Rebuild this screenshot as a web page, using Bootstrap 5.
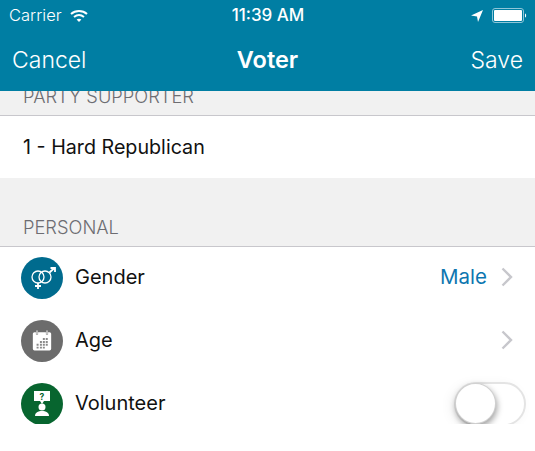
<!DOCTYPE html>
<html lang="en">

<head>
    <meta charset="UTF-8">
    <meta name="viewport" content="width=device-width, initial-scale=1.0">
    <title>Voter</title>

    <link rel="stylesheet" href="https://cdn.jsdelivr.net/npm/bootstrap@5.3.0/dist/css/bootstrap.min.css">

    <style>
        body {
            font-family: Inter, "Liberation Sans", sans-serif;
            background-color: #fff;
            overflow: hidden;
        }

        .app-top {
            height: 91px;
            background-color: #007ea3;
            color: #fff;
        }

        .status-bar {
            height: 30px;
            padding: 1px 8px 0 9px;
            font-size: 16.5px;
            font-weight: 300;
        }

        .status-side {
            width: 180px;
        }

        .clock {
            font-weight: 500;
            font-size: 17px;
        }

        .nav-bar {
            height: 61px;
            padding: 0 12px 1px;
            font-size: 23px;
            font-weight: 300;
        }

        .nav-side {
            width: 120px;
        }

        .nav-title {
            font-weight: 600;
            font-size: 23.5px;
        }

        .section-gap {
            background-color: #f1f1f1;
            border-bottom: 1px solid #c8c7cc;
            padding: 0 23px 9px;
            color: #6d6d72;
            font-size: 18.3px;
            font-weight: 300;
            line-height: 20px;
            overflow: hidden;
        }

        .party-head {
            height: 25px;
        }

        .personal-head {
            height: 69px;
        }

        .value-row {
            height: 62px;
            padding: 2px 23px 0;
            font-size: 19.7px;
            color: #111;
        }

        .rows-clip {
            height: 177px;
            overflow: hidden;
        }

        .item-row {
            height: 63px;
            padding: 0 9px 3px 21px;
            font-size: 20px;
            color: #111;
        }

        .item-icon {
            width: 42px;
            height: 42px;
            margin-right: 12px;
            margin-top: 1px;
        }

        .icon-gender { background-color: #006b8e; }
        .icon-age { background-color: #6c6c6c; }
        .icon-volunteer { background-color: #07652f; }

        .item-value {
            color: #0d76b0;
            font-size: 20.5px;
            margin-right: 14px;
        }

        .item-arrow {
            margin-right: 13px;
        }

        .switch-track {
            width: 72px;
            height: 44px;
            margin-top: 9px;
            border: 2px solid #e4e4e4;
            border-radius: 22px;
            background-color: #fff;
            box-shadow: -4px 2px 12px rgba(0, 0, 0, 0.05);
        }

        .switch-knob {
            width: 41px;
            height: 41px;
            margin: -1px 0 0 -1px;
            border-radius: 50%;
            background-color: #fff;
            border: 1px solid rgba(0, 0, 0, 0.18);
            box-shadow: 1px 3px 6px rgba(0, 0, 0, 0.38);
        }
    </style>
</head>

<body>

    <div class="app-top">
        <div class="status-bar d-flex align-items-center justify-content-between">
            <div class="status-side d-flex align-items-center gap-2">
                <span>Carrier</span>
                <svg width="18" height="14" viewBox="0 0 18 14" fill="none" stroke="#fff" stroke-width="2">
                    <path d="M1 5 C5.5 1 12.5 1 17 5" />
                    <path d="M4 8 C7 5.6 11 5.6 14 8" />
                    <path d="M9 13 L6.6 10.6 C8 9.6 10 9.6 11.4 10.6 Z" fill="#fff" stroke="none" />
                </svg>
            </div>
            <span class="clock">11:39 AM</span>
            <div class="status-side d-flex align-items-center justify-content-end gap-2">
                <svg width="14" height="14" viewBox="0 0 14 14" fill="#fff">
                    <path d="M1 6.500 L13 1 L8 13 L7 7.500 Z" />
                </svg>
                <svg width="35" height="15" viewBox="0 0 35 15">
                    <rect x="0.500" y="0.500" width="31" height="14" rx="2.500" fill="none" stroke="#8fc6d8" />
                    <rect x="2" y="2" width="28" height="11" rx="1" fill="#fff" />
                    <path d="M33 5.500 C34.500 5.500 34.500 9.500 33 9.500 Z" fill="#fff" />
                </svg>
            </div>
        </div>
        <div class="nav-bar d-flex align-items-center justify-content-between">
            <span class="nav-side">Cancel</span>
            <span class="nav-title">Voter</span>
            <span class="nav-side text-end">Save</span>
        </div>
    </div>

    <div class="section-gap party-head d-flex align-items-end">
        <span class="text-nowrap">PARTY SUPPORTER</span>
    </div>
    <div class="value-row d-flex align-items-center">1 - Hard Republican</div>

    <div class="section-gap personal-head d-flex align-items-end">
        <span>PERSONAL</span>
    </div>

    <div class="rows-clip">
        <div class="item-row d-flex align-items-center">
            <div class="item-icon icon-gender rounded-circle d-flex align-items-center justify-content-center">
                <svg width="27" height="22" viewBox="0 0 27 22" fill="none" stroke="#fff" stroke-width="1.3">
                    <circle cx="9" cy="10" r="6" />
                    <circle cx="16" cy="10" r="6" />
                    <path d="M9 16 V22 M6 19 H12" stroke-width="1.800" />
                    <path d="M20.500 5.500 L25.500 1 M21.500 1 H26 V5" stroke-width="1.800" />
                </svg>
            </div>
            <span class="flex-grow-1">Gender</span>
            <span class="item-value">Male</span>
            <svg class="item-arrow" width="12" height="20" viewBox="0 0 12 20" fill="none" stroke="#c7c7cc" stroke-width="2.400">
                <path d="M1.500 1.500 L10 10 L1.500 18.500" />
            </svg>
        </div>
        <div class="item-row d-flex align-items-center">
            <div class="item-icon icon-age rounded-circle d-flex align-items-center justify-content-center">
                <svg width="20" height="23" viewBox="0 0 24 26">
                    <rect x="1" y="3" width="22" height="22" rx="2" fill="#fff" />
                    <rect x="5" y="0.500" width="2" height="5" fill="#fff" stroke="#6c6c6c" stroke-width="0.600" />
                    <rect x="17" y="0.500" width="2" height="5" fill="#fff" stroke="#6c6c6c" stroke-width="0.600" />
                    <path d="M13 10h2.400v2.400H13zM16.500 10h2.400v2.400h-2.400zM9.500 13.500h2.400v2.400H9.500zM13 13.500h2.400v2.400H13zM16.500 13.500h2.400v2.400h-2.400zM5.500 17h2.400v2.400H5.500zM9.500 17h2.400v2.400H9.500zM13 17h2.400v2.400H13zM16.500 17h2.400v2.400h-2.400zM5.500 20.500h2.400v2H5.500zM9.500 20.500h2.400v2H9.500zM13 20.500h2.400v2H13z" fill="#8a8a8a" />
                </svg>
            </div>
            <span class="flex-grow-1">Age</span>
            <svg class="item-arrow" width="12" height="20" viewBox="0 0 12 20" fill="none" stroke="#c7c7cc" stroke-width="2.400">
                <path d="M1.500 1.500 L10 10 L1.500 18.500" />
            </svg>
        </div>
        <div class="item-row d-flex align-items-center">
            <div class="item-icon icon-volunteer rounded-circle d-flex align-items-center justify-content-center">
                <svg width="18" height="26" viewBox="0 0 18 26">
                    <path d="M1 0 H17 V10 H11 L9 13 L7 10 H1 Z" fill="#fff" />
                    <circle cx="9" cy="16" r="3.500" fill="#fff" />
                    <path d="M2 25 C2 21.500 5 20 9 20 C13 20 16 21.500 16 25 Z" fill="#fff" />
                    <text x="9" y="8.500" text-anchor="middle" font-size="8.500" font-weight="700" font-family="Inter, sans-serif" fill="#07652f">?</text>
                </svg>
            </div>
            <span class="flex-grow-1">Volunteer</span>
            <div class="switch-track align-self-start">
                <div class="switch-knob"></div>
            </div>
        </div>
    </div>

</body>

</html>
